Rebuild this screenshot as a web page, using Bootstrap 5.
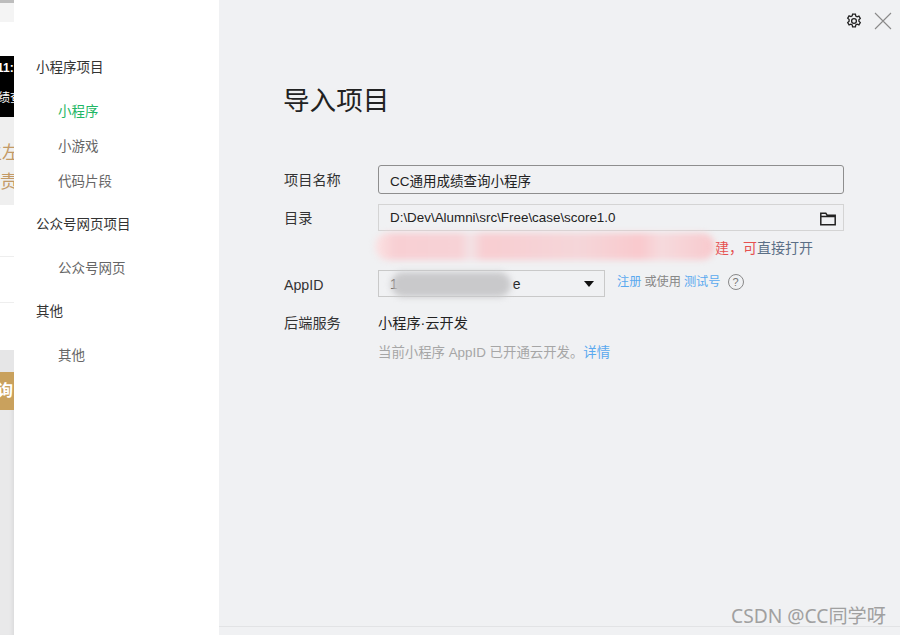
<!DOCTYPE html>
<html lang="zh">
<head>
<meta charset="utf-8">
<link href="https://cdn.jsdelivr.net/npm/bootstrap@5.3.0/dist/css/bootstrap.min.css" rel="stylesheet">
<style>
html,body{height:635px;overflow:hidden}
body{font-family:"Liberation Sans","Noto Sans CJK SC",sans-serif;font-size:14px;color:#222;background:#f0f1f3}
.shell{height:635px;position:relative;overflow:hidden}
.behind{width:14px;flex:none;overflow:hidden;background:#e9e9ea;box-shadow:inset -4px 0 4px -3px rgba(0,0,0,.08)}
.b1{height:3px;background:#bdbdbd}.b2{height:19px;background:#f4f4f4}.b3{height:34px;background:#fff}
.b4{height:61px;background:#000;color:#fff;font-size:12px;line-height:1;white-space:nowrap;padding-top:6px}
.b4 span{display:block;margin-left:-3px;font-weight:700}.b4 .two{margin-top:18px;margin-left:-2px;font-weight:400}
.b5{height:88px;background:#efefef;color:#c39a66;font-size:18px;line-height:29px;padding-top:22px;white-space:nowrap}
.b5 span{display:block}.b5 .l1{margin-left:-16px}.b5 .l2{margin-left:-18px}
.b6{height:52px;background:#fff;border-bottom:1px solid #eee}.b7{height:46px;background:#fff;border-bottom:1px solid #eee}.b8{height:47px;background:#fff}
.b9{height:22px;background:#e6e6e7}
.b10{height:38px;background:#c9a15d;color:#fff;font-size:16px;font-weight:700;line-height:38px;white-space:nowrap}
.b10 span{margin-left:-3px}
.side{width:205px;flex:none;background:#fff;padding:57px 0 0 22px;font-size:13.5px}
.side-head{color:#333;line-height:22px}
.side-list{padding-left:22px;margin:22px 0 0;list-style:none}
.side-list li{color:#666;height:35px;line-height:22px}
.side-list li.on{color:#1fb765}
.side-list + .side-head{margin-top:8px}
.main-pane{flex:1;min-width:0;padding:0 56px 0 65px;position:relative}
.top-tools{height:42px;margin-right:-48px;padding-top:13px}
.page-title{font-size:26.6px;line-height:32px;font-weight:400;margin:43px 0 0;color:#222;margin-left:-1px}
.lbl{width:94px;flex:none;color:#333;line-height:20px;font-size:14.2px}
.frow{display:flex;align-items:center}
.fake-input{flex:1;background:transparent;border:1px solid #8e8e8e;border-radius:3px;height:29px;padding:0 11px;font-size:13.5px;color:#222;box-shadow:none}
.fake-input:focus{background:transparent;border-color:#8e8e8e;box-shadow:none}
.dir-box{flex:1;height:27px;border:1px solid #d4d4d4;padding:0 7px 0 11px;line-height:24px;color:#222;font-size:13.4px}
.dir-box svg{margin-top:2px}
.note-line{margin:7px 0 0 94px;height:20px;line-height:20px;text-align:right;padding-right:31px;color:#5b6f86;font-size:14px}
.note-line b{font-weight:400;color:#e6504f}
.sel{width:227px;height:27px;border:1px solid #c9c9c9;padding:0 10px 0 11px;line-height:26px;position:relative}
.caret-mark{width:0;height:0;border-left:5px solid transparent;border-right:5px solid transparent;border-top:6px solid #111}
.smalls{font-size:12.2px;color:#888;margin-left:12px;margin-top:-2px;gap:3px}
.lnk{color:#5aa9ef}
.help{width:16px;height:16px;border:1px solid #888;border-radius:50%;font-size:11px;line-height:14px;text-align:center;color:#777;margin-left:4px}
.cloud-note{margin:9px 0 0 94px;font-size:13.4px;color:#a6a6a6;line-height:20px}
.cloud-note .lnk{color:#5aa9ef}
.cloud-line{font-size:14.2px}
.smudge{position:absolute;filter:blur(3px);border-radius:14px}
.sm-pink{left:156px;top:233px;width:340px;height:27px;background:linear-gradient(90deg,#fbe3e4 0,#f8cfd3 6%,#f7d2d6 25%,#f3e3e6 28%,#f8cdd1 32%,#f5d6d9 60%,#f9c9cd 78%,#f6dadd 84%,#f8c9cd 100%)}
.sm-grey{left:172px;top:272px;width:120px;height:25px;background:#c9c9cb}
.foot-line{position:absolute;left:219px;right:0;top:626px;height:1px;background:#e2e3e5}
.wmark{position:absolute;right:14px;top:604px;font-family:"Noto Sans","Noto Sans CJK SC",sans-serif;font-size:19.2px;line-height:24px;color:#a0a0a0;white-space:nowrap}
</style>
</head>
<body>
<div class="shell d-flex">
  <div class="behind">
    <div class="b1"></div><div class="b2"></div><div class="b3"></div>
    <div class="b4"><span>11:</span><span class="two">绩查</span></div>
    <div class="b5"><span class="l1">生左</span><span class="l2">绩责</span></div>
    <div class="b6"></div><div class="b7"></div><div class="b8"></div>
    <div class="b9"></div>
    <div class="b10"><span>询</span></div>
  </div>
  <nav class="side">
    <div class="side-head">小程序项目</div>
    <ul class="side-list"><li class="on">小程序</li><li>小游戏</li><li>代码片段</li></ul>
    <div class="side-head">公众号网页项目</div>
    <ul class="side-list"><li>公众号网页</li></ul>
    <div class="side-head">其他</div>
    <ul class="side-list"><li>其他</li></ul>
  </nav>
  <main class="main-pane">
    <div class="top-tools d-flex justify-content-end align-items-start gap-2">
      <svg width="16" height="16" viewBox="0 0 16 16" fill="none" stroke="#222" stroke-width="1.3" style="margin-right:4px"><path d="M6.6 1.2h2.8l.4 1.9 1.3.7 1.8-.7 1.4 2.4-1.4 1.3v1.4l1.4 1.3-1.4 2.4-1.8-.7-1.3.7-.4 1.9H6.6l-.4-1.9-1.3-.7-1.8.7-1.4-2.4 1.4-1.3V6.5L1.7 5.2l1.4-2.4 1.8.7 1.3-.7z"/><circle cx="8" cy="8" r="2.4"/></svg>
      <svg width="18" height="18" viewBox="0 0 18 18" fill="none" stroke="#8a8a8a" stroke-width="1.1" style="margin-top:-1px"><path d="M1 1l16 16M17 1L1 17"/></svg>
    </div>
    <h1 class="page-title">导入项目</h1>
    <div class="frow" style="margin-top:48px"><div class="lbl">项目名称</div><input class="form-control fake-input" value="CC通用成绩查询小程序"></div>
    <div class="frow" style="margin-top:10px"><div class="lbl">目录</div>
      <div class="dir-box d-flex justify-content-between align-items-center"><span>D:\Dev\Alumni\src\Free\case\score1.0</span>
        <svg width="16" height="14" viewBox="0 0 16 14" fill="none" stroke="#222" stroke-width="1.5"><path d="M.8 12.8V1.2h5l1.3 2h8.1v9.6zM.8 4.6h14.4"/></svg>
      </div>
    </div>
    <div class="note-line"><b>建，可</b>直接打开</div>
    <div class="frow" style="margin-top:12px"><div class="lbl" style="padding-top:2px">AppID</div>
      <div class="sel d-flex justify-content-between align-items-center"><span>1</span><span style="margin-left:115px;margin-right:auto">e</span><i class="caret-mark"></i></div>
      <div class="smalls d-flex align-items-center"><span class="lnk">注册</span><span>或使用</span><span class="lnk">测试号</span><span class="help">?</span></div>
    </div>
    <div class="frow cloud-line" style="margin-top:16px"><div class="lbl" style="margin-top:-2px">后端服务</div><div>小程序·云开发</div></div>
    <div class="cloud-note">当前小程序 AppID 已开通云开发。<span class="lnk">详情</span></div>
    <div class="smudge sm-pink"></div>
    <div class="smudge sm-grey"></div>
  </main>
  <div class="foot-line"></div>
  <div class="wmark">CSDN @CC同学呀</div>
</div>
<script src="https://cdn.jsdelivr.net/npm/bootstrap@5.3.0/dist/js/bootstrap.bundle.min.js"></script>
</body>
</html>
